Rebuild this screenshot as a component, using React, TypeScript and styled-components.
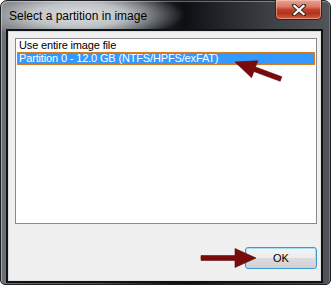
import React from "react";
import styled, { createGlobalStyle } from "styled-components";

const Global = createGlobalStyle`
  html, body { margin: 0; padding: 0; background: #ffffff; }
  body { width: 331px; height: 289px; overflow: hidden; }
`;

const Stage = styled.div`
  position: relative;
  width: 331px;
  height: 289px;
`;

const Window = styled.div`
  box-sizing: border-box;
  width: 331px;
  height: 285px;
  display: flex;
  flex-direction: column;
  padding: 0 7px 1px 5px;
  border: 1px solid #1d2124;
  border-radius: 7px 7px 5px 5px;
  box-shadow: inset 1px 1px 0 rgba(255, 255, 255, 0.35), inset -1px 0 0 rgba(255, 255, 255, 0.2);
  background:
    radial-gradient(ellipse 105px 26px at 78px 14px, rgba(226, 228, 230, 0.97) 0%, rgba(210, 213, 216, 0.85) 45%, rgba(150, 154, 158, 0) 100%),
    linear-gradient(to right, #6c7075 0%, #50555a 30%, #1c2024 48%, #0d1013 56%, #24282c 68%, #3d4146 82%, #51555a 100%);
  font-family: "Liberation Sans", Arial, sans-serif;
`;

const TitleBar = styled.div`
  height: 28px;
  display: flex;
  justify-content: space-between;
  align-items: flex-start;
`;

const Title = styled.div`
  padding: 8px 0 0 3px;
  font-size: 12px;
  color: #000;
  letter-spacing: 0;
`;

const CloseButton = styled.div`
  box-sizing: border-box;
  width: 47px;
  height: 20px;
  margin: -1px 1px 0 0;
  border: 1px solid #4a1a12;
  border-top: none;
  border-radius: 0 0 5px 5px;
  display: flex;
  align-items: center;
  justify-content: center;
  background: linear-gradient(to bottom, #e9a394 0%, #d97a66 35%, #c2432b 50%, #b2321c 70%, #d5603d 100%);
  box-shadow: inset 0 0 0 1px rgba(255, 220, 210, 0.45);
`;

const Client = styled.div`
  flex: 1;
  box-sizing: border-box;
  display: flex;
  flex-direction: column;
  background: #f0f0f0;
  border: 2px solid #0e1215;
  box-shadow: inset 1px 1px 0 #d9dadb, inset -1px -1px 0 #e2e2e2;
  padding: 7px 4px 12px 7px;
`;

const ListBox = styled.div`
  box-sizing: border-box;
  height: 186px;
  background: #ffffff;
  border: 1px solid #8a8a8a;
  padding: 0 1px;
  display: flex;
  flex-direction: column;
`;

const Row = styled.div<{ $selected?: boolean }>`
  box-sizing: border-box;
  height: 13px;
  line-height: 13px;
  padding-left: 2px;
  font-size: 11px;
  letter-spacing: -0.15px;
  white-space: nowrap;
  color: ${(p) => (p.$selected ? "#ffffff" : "#000000")};
  background: ${(p) => (p.$selected ? "#3399ff" : "transparent")};
  outline: ${(p) => (p.$selected ? "1px dotted #e0852a" : "none")};
  outline-offset: -1px;
`;

const Footer = styled.div`
  margin-top: auto;
  display: flex;
  justify-content: flex-end;
`;

const OkButton = styled.div`
  box-sizing: border-box;
  width: 72px;
  height: 22px;
  border: 1px solid #3c9ad6;
  border-radius: 3px;
  display: flex;
  align-items: center;
  justify-content: center;
  font-size: 11px;
  color: #000;
  background: linear-gradient(to bottom, #f4f4f4 0%, #ececec 48%, #dcdcdc 52%, #d0d0d0 100%);
  box-shadow: inset 0 0 0 1px #a9ddf6;
`;

const Overlay = styled.svg`
  position: absolute;
  left: 0;
  top: 0;
  pointer-events: none;
`;

function arrowPoints(x1: number, y1: number, x2: number, y2: number, hl: number, hw: number, sw: number) {
  const dx = x2 - x1;
  const dy = y2 - y1;
  const len = Math.hypot(dx, dy);
  const ux = dx / len;
  const uy = dy / len;
  const px = -uy;
  const py = ux;
  const bx = x2 - ux * hl;
  const by = y2 - uy * hl;
  const pts: [number, number][] = [
    [x1 + px * sw, y1 + py * sw],
    [bx + px * sw, by + py * sw],
    [bx + px * hw, by + py * hw],
    [x2, y2],
    [bx - px * hw, by - py * hw],
    [bx - px * sw, by - py * sw],
    [x1 - px * sw, y1 - py * sw],
  ];
  return pts.map((p) => p.join(",")).join(" ");
}

export default function App() {
  return (
    <Stage>
      <Global />
      <Window>
        <TitleBar>
          <Title>Select a partition in image</Title>
          <CloseButton>
            <svg width="16" height="12" viewBox="0 0 16 12">
              <path d="M3 1.5 L13 10.5 M13 1.5 L3 10.5" stroke="#3a2a28" strokeWidth="4.2" strokeLinecap="round" />
              <path d="M3.5 2 L12.5 10 M12.5 2 L3.5 10" stroke="#ffffff" strokeWidth="2.3" strokeLinecap="square" />
            </svg>
          </CloseButton>
        </TitleBar>
        <Client>
          <ListBox>
            <Row>Use entire image file</Row>
            <Row $selected>Partition 0 - 12.0 GB (NTFS/HPFS/exFAT)</Row>
          </ListBox>
          <Footer>
            <OkButton>OK</OkButton>
          </Footer>
        </Client>
      </Window>
      <Overlay width="331" height="289" viewBox="0 0 331 289">
        <polygon points={arrowPoints(281, 79, 235, 62, 21, 9, 2.4)} fill="#7a0b0b" stroke="#5e0505" strokeWidth="0.6" strokeLinejoin="round" />
        <polygon points={arrowPoints(201, 258, 256, 258, 21, 9.5, 2.4)} fill="#7a0b0b" stroke="#5e0505" strokeWidth="0.6" strokeLinejoin="round" />
      </Overlay>
    </Stage>
  );
}
